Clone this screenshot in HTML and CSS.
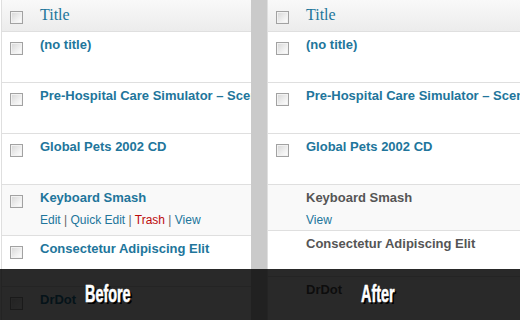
FILE: index.html
```html
<!DOCTYPE html>
<html lang="en">
<head>
  <meta charset="UTF-8" />
  <title>Before / After</title>
  <link rel="stylesheet" href="styles.css">
</head>
<body>
  <div class="compare">
    <div class="panel panel-before">
      <div class="head">
        <div class="check"><span class="box"></span></div>
        <div class="head-title">Title</div>
      </div>
      <div class="row">
        <div class="check"><span class="box"></span></div>
        <div class="cell"><a class="row-title">(no title)</a><div class="row-actions"></div></div>
      </div>
      <div class="row">
        <div class="check"><span class="box"></span></div>
        <div class="cell"><a class="row-title">Pre-Hospital Care Simulator – Scenario Editor</a><div class="row-actions"></div></div>
      </div>
      <div class="row">
        <div class="check"><span class="box"></span></div>
        <div class="cell"><a class="row-title">Global Pets 2002 CD</a><div class="row-actions"></div></div>
      </div>
      <div class="row row-hover">
        <div class="check"><span class="box"></span></div>
        <div class="cell">
          <a class="row-title">Keyboard Smash</a>
          <div class="row-actions">
            <a>Edit</a> <span class="sep">|</span> <a>Quick Edit</a> <span class="sep">|</span> <a class="trash">Trash</a> <span class="sep">|</span> <a>View</a>
          </div>
        </div>
      </div>
      <div class="row">
        <div class="check"><span class="box"></span></div>
        <div class="cell"><a class="row-title">Consectetur Adipiscing Elit</a><div class="row-actions"></div></div>
      </div>
      <div class="row">
        <div class="check"><span class="box"></span></div>
        <div class="cell"><a class="row-title">DrDot</a><div class="row-actions"></div></div>
      </div>
    </div>

    <div class="divider"></div>

    <div class="panel panel-after">
      <div class="head">
        <div class="check"><span class="box"></span></div>
        <div class="head-title">Title</div>
      </div>
      <div class="row">
        <div class="check"><span class="box"></span></div>
        <div class="cell"><a class="row-title">(no title)</a><div class="row-actions"></div></div>
      </div>
      <div class="row">
        <div class="check"><span class="box"></span></div>
        <div class="cell"><a class="row-title">Pre-Hospital Care Simulator – Scenario Editor</a><div class="row-actions"></div></div>
      </div>
      <div class="row">
        <div class="check"><span class="box"></span></div>
        <div class="cell"><a class="row-title">Global Pets 2002 CD</a><div class="row-actions"></div></div>
      </div>
      <div class="row row-hover row-locked">
        <div class="check"></div>
        <div class="cell">
          <span class="row-title locked">Keyboard Smash</span>
          <div class="row-actions"><a>View</a></div>
        </div>
      </div>
      <div class="row row-locked">
        <div class="check"></div>
        <div class="cell"><span class="row-title locked">Consectetur Adipiscing Elit</span><div class="row-actions"></div></div>
      </div>
      <div class="row row-locked">
        <div class="check"></div>
        <div class="cell"><span class="row-title locked">DrDot</span><div class="row-actions"></div></div>
      </div>
    </div>
  </div>

  <div class="labels">
    <div class="label-half label-half-before"><span class="label">Before</span></div>
    <div class="label-half label-half-after"><span class="label">After</span></div>
  </div>
</body>
</html>
```

FILE: styles.css
```css
html, body {
  margin: 0;
  padding: 0;
}

body {
  width: 520px;
  height: 320px;
  overflow: hidden;
  position: relative;
  background: #fff;
  font-family: "Liberation Sans", Arial, sans-serif;
}

.compare {
  display: flex;
  height: 320px;
}

.panel {
  border-left: 1px solid #dfdfdf;
  background: #fff;
  overflow: hidden;
  min-width: 0;
}

.panel-before {
  margin-left: 1px;
  width: 249px;
}

.panel-after {
  flex: 1;
}

.divider {
  width: 16px;
  background: #cacaca;
}

.head {
  display: flex;
  height: 31px;
  border-bottom: 1px solid #dfdfdf;
  background: linear-gradient(#f9f9f9, #ececec);
}

.check {
  width: 38px;
  flex: none;
  padding-left: 8px;
  box-sizing: border-box;
}

.head .check {
  padding-top: 11px;
}

.row .check {
  padding-top: 10px;
}

.box {
  display: block;
  width: 11px;
  height: 11px;
  border: 1px solid #a2a2a2;
  background: linear-gradient(135deg, #d6d6d6 0%, #f0f0f0 60%, #fff 100%);
  box-shadow: inset 0 0 0 1px #f2f2f2;
}

.head-title {
  font-family: "Liberation Serif", Georgia, serif;
  font-size: 16px;
  line-height: 20px;
  padding-top: 5px;
  color: #21759b;
}

.row {
  display: flex;
  border-bottom: 1px solid #dfdfdf;
  height: 50px;
}

.row-locked {
  height: 45px;
}

.row-hover {
  background: #f9f9f9;
}

.cell {
  flex: 1;
  min-width: 0;
  padding-top: 3px;
  white-space: nowrap;
}

.row-title {
  display: block;
  font-size: 13px;
  font-weight: bold;
  line-height: 20px;
  color: #21759b;
}

.row-title.locked {
  color: #555;
}

.row-actions {
  margin-top: 3px;
  height: 18px;
  font-size: 12px;
  line-height: 18px;
  color: #666;
}

.row-actions a {
  color: #21759b;
}

.row-actions .trash {
  color: #bc0b0b;
}

.labels {
  position: absolute;
  left: 0;
  right: 0;
  top: 269px;
  height: 51px;
  display: flex;
  background: rgba(0, 0, 0, 0.84);
}

.label-half {
  padding-top: 13px;
  box-sizing: border-box;
}

.label-half-before {
  width: 251px;
  padding-left: 85px;
}

.label-half-after {
  flex: 1;
  padding-left: 110px;
}

.label {
  display: inline-block;
  font-size: 24px;
  line-height: 24px;
  font-weight: bold;
  color: #fff;
  -webkit-text-stroke: 0.6px #fff;
  text-shadow: 3px 2px 0 #000;
  transform: scaleX(0.6);
  transform-origin: left top;
}
```
